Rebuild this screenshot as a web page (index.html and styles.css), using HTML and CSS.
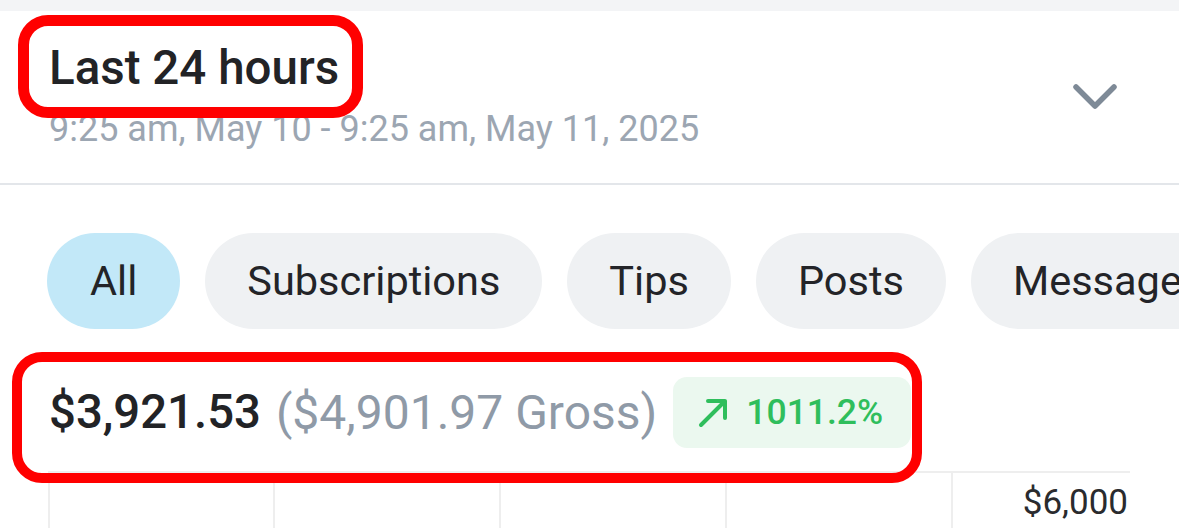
FILE: index.html
```html
<!DOCTYPE html>
<html lang="en">
<head>
<meta charset="utf-8">
<title>Earnings</title>
<link rel="stylesheet" href="styles.css">
</head>
<body>
<div class="page">
  <div class="topband"></div>
  <header class="range">
    <div class="range-text">
      <div class="range-title">Last 24 hours</div>
      <div class="range-sub">9:25 am, May 10 - 9:25 am, May 11, 2025</div>
    </div>
    <svg class="chevron" width="44" height="26" viewBox="0 0 44 26" aria-hidden="true">
      <polyline points="3,3 22,22 41,3" fill="none" stroke="#7e8a97" stroke-width="5.5" stroke-linecap="round" stroke-linejoin="round"/>
    </svg>
  </header>

  <nav class="chips">
    <span class="chip chip-active">All</span>
    <span class="chip">Subscriptions</span>
    <span class="chip">Tips</span>
    <span class="chip">Posts</span>
    <span class="chip">Messages</span>
  </nav>

  <div class="totals">
    <span class="net">$3,921.53</span>
    <span class="gross">($4,901.97 Gross)</span>
    <span class="badge">
      <svg class="badge-arrow" width="30" height="30" viewBox="0 0 30 30" aria-hidden="true">
        <path d="M3 27 L27 3 M10 3 H27 V20" fill="none" stroke="#2fbe5c" stroke-width="4" stroke-linecap="round" stroke-linejoin="round"/>
      </svg>
      <span class="badge-text">1011.2%</span>
    </span>
  </div>

  <div class="chart">
    <div class="col"></div>
    <div class="col"></div>
    <div class="col"></div>
    <div class="col"></div>
    <div class="col col-label">$6,000</div>
  </div>

  <div class="mark mark-title"></div>
  <div class="mark mark-totals"></div>
</div>
</body>
</html>
```

FILE: styles.css
```css
* { box-sizing: border-box; }
html, body { margin: 0; padding: 0; background: #ffffff; }
body {
  font-family: Roboto, "Noto Sans", "Liberation Sans", sans-serif;
  color: #222326;
  width: 1179px;
  height: 528px;
  overflow: hidden;
}
.page { position: relative; width: 1179px; height: 528px; overflow: hidden; }

.topband { height: 11px; background: #f3f4f6; }

.range {
  display: flex;
  align-items: center;
  justify-content: space-between;
  padding: 29px 0 32px 49px;
  border-bottom: 2px solid #e3e6ea;
}
.range-title {
  font-size: 47.5px;
  line-height: 56px;
  font-weight: 500;
  color: #222326;
}
.range-sub {
  margin-top: 11px;
  font-size: 36px;
  line-height: 44px;
  color: #9ca6b2;
}
.chevron { margin-right: 62px; margin-top: 2px; }

.chips {
  display: flex;
  gap: 25px;
  margin-top: 48px;
  padding-left: 47px;
  white-space: nowrap;
}
.chip {
  flex: none;
  height: 96px;
  line-height: 96px;
  padding: 0 42px;
  border-radius: 48px;
  background: #eff1f3;
  font-size: 41.5px;
  color: #232428;
}
.chip-active { background: #c2e8f8; padding: 0 43px; }

.totals {
  display: flex;
  align-items: center;
  margin-top: 48px;
  padding-left: 49px;
  height: 71px;
  white-space: nowrap;
}
.net {
  font-size: 47.3px;
  line-height: 71px;
  font-weight: 500;
  color: #222326;
}
.gross {
  margin-left: 15px;
  font-size: 48px;
  line-height: 71px;
  color: #8f9aa7;
}
.badge {
  display: flex;
  align-items: center;
  gap: 18px;
  margin-left: 16px;
  height: 71px;
  padding: 0 28px 0 25px;
  border-radius: 14px;
  background: #ebf8ef;
}
.badge-arrow { flex: none; margin-top: 1px; }
.badge-text {
  font-size: 35.5px;
  line-height: 71px;
  font-weight: 500;
  color: #2fbe5c;
}

.chart {
  display: grid;
  grid-template-columns: 225px 226px 226px 226px 1fr;
  width: 1082px;
  margin: 23px 0 0 48px;
  height: 80px;
  border-top: 2px solid #eeeeee;
}
.col { border-left: 2px solid #eeeeee; }
.col-label {
  text-align: right;
  padding: 8px 2px 0 0;
  font-size: 35px;
  line-height: 44px;
  color: #2a2b2e;
}

.mark {
  position: absolute;
  border: 11px solid #ff0000;
  border-radius: 30px;
  pointer-events: none;
}
.mark-title { left: 18px; top: 15px; width: 345px; height: 103px; }
.mark-totals { left: 12px; top: 352px; width: 910px; height: 131px; border-width: 10px; }
```
